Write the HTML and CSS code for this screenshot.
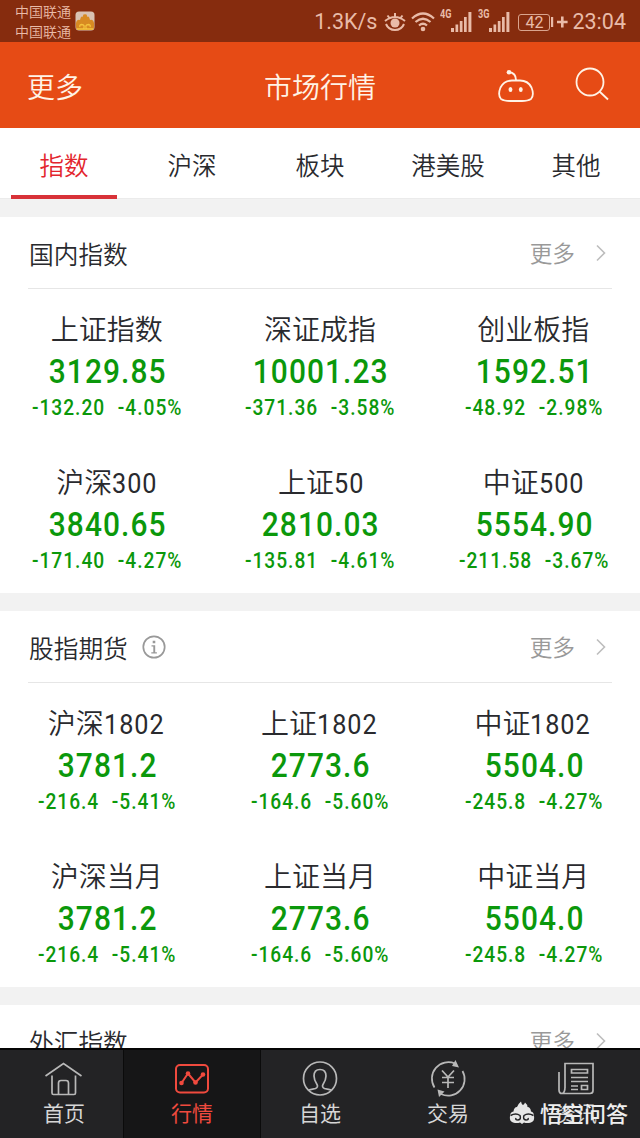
FILE: index.html
```html
<!DOCTYPE html>
<html lang="zh-CN">
<head>
<meta charset="utf-8">
<title>市场行情</title>
<link rel="stylesheet" href="styles.css">
</head>
<body>
<div class="app">
  <div class="status">
    <div class="carriers"><span>中国联通</span><span>中国联通</span></div>
    <svg class="app-badge" width="20" height="20" viewBox="0 0 20 20"><rect x=".5" y=".5" width="19" height="19" rx="3.5" fill="#d9c2b2"/><path d="M1 16V12Q2 8 5 9Q6 4 7.500 6Q9 1 10 4Q11 1 12.500 6Q14 4 15 9Q18 8 19 12V16Q19 19 16 19H4Q1 19 1 16Z" fill="#d88a22"/><path d="M8.500 18Q10.500 13.500 6.500 13.500Q4 14 5 16M11.500 18Q9.500 13.500 13.500 13.500Q16 14 15 16M2 18H18" fill="none" stroke="#f4c33e" stroke-width="1.300"/></svg>
    <div class="status-right">
      <span class="speed">1.3K/s</span>
      <svg class="eye" width="22" height="20" viewBox="0 0 22 20" fill="none" stroke="#e9bba8" stroke-width="2"><path d="M1 9Q11 1 21 9M11 1V5M3.500 3.500L5.500 6M18.500 3.500L16.500 6M2 12Q4.500 18 11 18Q17.500 18 20 12"/><circle cx="11" cy="11" r="4.500" fill="#e9bba8" stroke="none"/></svg>
      <svg class="wifi" width="24" height="20" viewBox="0 0 24 20" fill="none" stroke="#e9bba8" stroke-width="2.200"><path d="M1 6.500Q12-3.500 23 6.500M4.500 10Q12 3.500 19.500 10M8 13.500Q12 10 16 13.500"/><circle cx="12" cy="17" r="2.300" fill="#e9bba8" stroke="none"/></svg>
      <span class="net">4G</span>
      <svg class="signal" width="21" height="20" viewBox="0 0 21 20" fill="#e9bba8"><path d="M0 16h3v4H0zM4.500 12.500h2.700V20H4.500zM8.800 9h2.700v11H8.800zM13 5h2.700v15H13zM17.400 0h3v20h-3z"/></svg>
      <span class="net net-2">3G</span>
      <svg class="signal" width="21" height="20" viewBox="0 0 21 20" fill="#e9bba8"><path d="M0 16h3v4H0zM4.500 12.500h2.700V20H4.500zM8.800 9h2.700v11H8.800zM13 5h2.700v15H13zM17.400 0h3v20h-3z"/></svg>
      <span class="battery">42</span>
      <svg class="charge" width="17" height="18" viewBox="0 0 17 18" fill="#e9bba8"><path d="M0 4h2.200v10H0zM6 7.700h4V3.500h2.600v4.200h4v2.600h-4v4.200H10v-4.200H6z"/></svg>
      <span class="clock">23:04</span>
    </div>
  </div>

  <header class="header">
    <span class="header-more">更多</span>
    <h1 class="header-title">市场行情</h1>
    <div class="header-icons">
      <svg class="robot" width="38" height="34" viewBox="0 0 38 34" fill="none" stroke="#fff3e6" stroke-width="1.800"><path d="M19 11Q19 4 12 3"/><circle cx="12" cy="3.200" r="2.300" fill="#fff3e6" stroke="none"/><path d="M15 11.500H23Q31 11.500 34.500 18.500Q37.500 26 34 30Q31 32 25 32H13Q7 32 4 30Q.500 26 3.500 18.500Q7 11.500 15 11.500Z"/><g fill="#fff3e6" stroke="none"><ellipse cx="13.500" cy="20.500" rx="1.900" ry="2.500"/><ellipse cx="23.800" cy="20.500" rx="1.900" ry="2.500"/></g></svg>
      <svg width="34" height="34" viewBox="0 0 34 34" fill="none" stroke="#fff3e6" stroke-width="1.800"><circle cx="15" cy="15" r="13.500"/><path d="M24.500 24.500L33 32.500"/></svg>
    </div>
  </header>

  <nav class="tabs">
    <span class="tab tab-active">指数</span><span class="tab">沪深</span><span class="tab">板块</span><span class="tab">港美股</span><span class="tab">其他</span>
  </nav>

  <main class="content">
    <section class="section">
      <div class="section-head"><h2 class="section-title">国内指数</h2><span class="more">更多</span><svg class="chevron" width="12" height="18" viewBox="0 0 12 18"><path d="M2 1.500L9.500 9L2 16.500"/></svg></div>
      <div class="grid">
        <div class="quote"><div class="name">上证指数</div><div class="price">3129.85</div><div class="change"><span>-132.20</span><span>-4.05%</span></div></div>
        <div class="quote"><div class="name">深证成指</div><div class="price">10001.23</div><div class="change"><span>-371.36</span><span>-3.58%</span></div></div>
        <div class="quote"><div class="name">创业板指</div><div class="price">1592.51</div><div class="change"><span>-48.92</span><span>-2.98%</span></div></div>
        <div class="quote"><div class="name">沪深<b>300</b></div><div class="price">3840.65</div><div class="change"><span>-171.40</span><span>-4.27%</span></div></div>
        <div class="quote"><div class="name">上证<b>50</b></div><div class="price">2810.03</div><div class="change"><span>-135.81</span><span>-4.61%</span></div></div>
        <div class="quote"><div class="name">中证<b>500</b></div><div class="price">5554.90</div><div class="change"><span>-211.58</span><span>-3.67%</span></div></div>
      </div>
    </section>

    <section class="section">
      <div class="section-head"><h2 class="section-title">股指期货</h2><svg class="info" width="24" height="24" viewBox="0 0 24 24"><circle cx="12" cy="12" r="10.700" fill="none" stroke="#999" stroke-width="1.700"/><path d="M10.700 5.700h2.600v2.600h-2.600zM9.500 10.300h3.700v6.900h1.700v1.200H9.300v-1.200h2v-5.700H9.500z" fill="#999"/></svg><span class="more">更多</span><svg class="chevron" width="12" height="18" viewBox="0 0 12 18"><path d="M2 1.500L9.500 9L2 16.500"/></svg></div>
      <div class="grid">
        <div class="quote"><div class="name">沪深<b>1802</b></div><div class="price">3781.2</div><div class="change"><span>-216.4</span><span>-5.41%</span></div></div>
        <div class="quote"><div class="name">上证<b>1802</b></div><div class="price">2773.6</div><div class="change"><span>-164.6</span><span>-5.60%</span></div></div>
        <div class="quote"><div class="name">中证<b>1802</b></div><div class="price">5504.0</div><div class="change"><span>-245.8</span><span>-4.27%</span></div></div>
        <div class="quote"><div class="name">沪深当月</div><div class="price">3781.2</div><div class="change"><span>-216.4</span><span>-5.41%</span></div></div>
        <div class="quote"><div class="name">上证当月</div><div class="price">2773.6</div><div class="change"><span>-164.6</span><span>-5.60%</span></div></div>
        <div class="quote"><div class="name">中证当月</div><div class="price">5504.0</div><div class="change"><span>-245.8</span><span>-4.27%</span></div></div>
      </div>
    </section>

    <section class="section">
      <div class="section-head"><h2 class="section-title">外汇指数</h2><span class="more">更多</span><svg class="chevron" width="12" height="18" viewBox="0 0 12 18"><path d="M2 1.500L9.500 9L2 16.500"/></svg></div>
    </section>
  </main>

  <nav class="bottom">
    <div class="item"><svg width="38" height="38" viewBox="0 0 38 38"><path d="M.5 16L18.500 3.500L36.500 16M7 15.500V33Q7 34.500 8.500 34.500H13.500V23Q13.500 20.500 16 20.500H21Q23.500 20.500 23.500 23V34.500H29Q30.500 34.500 30.500 33V15.500M13.500 34.500H23.500"/></svg><span>首页</span></div>
    <div class="item item-active"><svg width="38" height="38" viewBox="0 0 38 38"><rect x="3" y="5" width="32" height="27.500" rx="4" stroke-width="2"/><path d="M8.500 23L15 13.500L22.500 22.500L30 14.500" stroke-width="2"/><g fill="#f04a3e" stroke="none"><circle cx="8.500" cy="23" r="2.300"/><circle cx="15" cy="13.500" r="2.300"/><circle cx="22.500" cy="22.500" r="2.300"/><circle cx="30" cy="14.500" r="2.300"/></g></svg><span>行情</span></div>
    <div class="item"><svg width="38" height="38" viewBox="0 0 38 38"><circle cx="19" cy="18.500" r="16.500"/><path d="M7.500 30Q10 29.500 14.500 28.500Q17.500 27 16 24.500Q13 20 13 16Q13 9.500 19 9.500Q25 9.500 25 16Q25 20 22 24.500Q20.500 27 23.500 28.500Q28 29.500 30.500 30"/></svg><span>自选</span></div>
    <div class="item"><svg width="38" height="38" viewBox="0 0 38 38"><path d="M5.500 27.500A16.500 16.500 0 0 1 26 3.500M33.500 11A16.500 16.500 0 0 1 12 34M13 10.500L19 17L25 10.500M13 17.500H25M13 22.500H25M19 17V28"/><path d="M26.500 0L30 7.500L23 6ZM8.500 29.500L15.500 31.500L10 37Z" fill="#b8b8b8" stroke="none"/></svg><span>交易</span></div>
    <div class="item"><svg width="38" height="38" viewBox="0 0 38 38"><path d="M8 28V3.500H36V30.500Q36 33.500 33 33.500H5Q2 33.500 2 30V12M8 27Q8 33 5 33.500M14.500 9.500H30.500V13H14.500ZM14 17.500H31M14 21.500H31M14 26H21M14 29.500H21M24.500 25.500H30.500V29.500H24.500Z"/></svg><span>资讯</span></div>
    <div class="watermark"><svg width="26" height="24" viewBox="0 0 26 24"><path d="M1 15Q1 11 4.500 10.500Q5 6 8 6Q9 3 12 .500Q12.500 3.500 14 4Q15.500 3 16 1.500Q18.500 3.500 18.500 6Q21.500 6 22 10.500Q25 11 25 15Q26 20 22 21.500Q18 22.500 15 21.500L13 23L11 21.500Q8 22.500 4 21.500Q0 20 1 15Z" fill="#e6e6e6"/><path d="M1.500 14.500Q7 11.500 11 14.500Q12.500 18.500 9 19Q6 19 7 17M24.500 14.500Q19 11.500 15 14.500Q13.500 18.500 17 19Q20 19 19 17" fill="none" stroke="#232325" stroke-width="1.500"/></svg><span>悟空问答</span></div>
  </nav>
</div>
</body>
</html>
```
FILE: styles.css
```css
* { box-sizing: border-box; }
body { margin: 0; }
h1, h2 { margin: 0; font-weight: inherit; }
svg { display: block; flex: none; }

.app {
  display: flex;
  flex-direction: column;
  width: 640px;
  height: 1138px;
  overflow: hidden;
  background: #f2f2f2;
  color: #292a2e;
  font-family: Roboto, "Noto Sans CJK SC", sans-serif;
  font-weight: 350;
  white-space: nowrap;
}

.status {
  flex: none;
  display: flex;
  align-items: center;
  height: 42px;
  padding: 0 14px 0 15px;
  background: #862c0e;
  color: #e9bba8;
  font-weight: 400;
}
.carriers { display: flex; flex-direction: column; font-size: 14px; line-height: 19.500px; font-weight: 350; padding-top: 3px; }
.app-badge { margin-left: 4px; }
.status-right { display: flex; align-items: center; margin-left: auto; font-size: 21.500px; line-height: 30px; padding-top: 2px; }
.eye { margin-left: 7px; }
.wifi { margin-left: 5px; }
.net { align-self: flex-start; margin: -1px 0 0 5px; font-size: 12px; line-height: 17px; font-weight: 700; transform: scaleX(.76); transform-origin: left; width: 11px; }
.net-2 { margin-left: 6px; }
.battery { width: 32px; height: 17px; margin-left: 8px; border: 1px solid #d9a48e; border-radius: 3px; font-size: 16px; line-height: 16px; text-align: center; }
.charge { margin-left: 1px; }
.clock { margin-left: 4px; }

.header {
  flex: none;
  display: grid;
  grid-template-columns: 1fr auto 1fr;
  align-items: center;
  height: 86px;
  padding: 0 28px;
  background: #e64b15;
  color: #fff3e6;
  font-size: 28px;
}
.header-more { margin-left: -1px; padding-top: 1px; }
.header-title { font-size: 28px; padding-top: 1px; }
.header-icons { display: flex; justify-content: flex-end; gap: 40px; margin-right: 3px; }
.robot { margin-top: 2px; }

.tabs {
  flex: none;
  display: grid;
  grid-template-columns: repeat(5, 1fr);
  height: 71px;
  background: #fff;
  border-bottom: 1px solid #ebebeb;
}
.tab { font-size: 24.500px; line-height: 77px; text-align: center; height: 71px; }
.tab-active { color: #e3252d; margin: 0 11px; border-bottom: 4px solid #d83238; }

.content { flex: 1; min-height: 0; overflow: hidden; display: flex; flex-direction: column; gap: 18px; padding-top: 18px; }
.section { flex: none; background: #fff; }
.section-head { display: flex; align-items: center; height: 72px; margin: 0 28px; border-bottom: 1px solid #e6e6e6; }
.section-title { font-size: 24.700px; margin-left: 1px; }
.info { margin-left: 14px; }
.more { margin-left: auto; font-size: 22.700px; color: #999; margin-top: -1px; }
.chevron { margin: 0 5px 0 20px; fill: none; stroke: #bdbdbd; stroke-width: 1.600; }

.grid { display: grid; grid-template-columns: repeat(3, 1fr); }
.quote { height: 152px; padding-top: 23px; text-align: center; }
.quote:nth-child(n+4) { padding-top: 23.500px; }
.name { font-size: 28px; line-height: 38px; }
.name b { display: inline-block; font-weight: 450; letter-spacing: 1.100px; transform: scaleX(.9); transform-origin: left; margin-right: -.2em; }
.price { margin-top: -2px; color: #0b980b; font-size: 34px; line-height: 46px; font-weight: 500; letter-spacing: 1.200px; transform: translateX(1px) scaleX(.88); }
.change { display: flex; justify-content: center; gap: 14px; color: #0b980b; font-size: 21.300px; line-height: 28px; font-weight: 500; letter-spacing: 1.100px; transform: translateX(.5px) scaleX(.9); }

.bottom {
  position: relative;
  flex: none;
  display: grid;
  grid-template-columns: repeat(5, 1fr);
  height: 90px;
  background: #232325;
  border-top: 2px solid #050505;
}
.item { display: flex; flex-direction: column; align-items: center; padding-top: 10px; color: #d6d6d6; font-size: 21px; line-height: 32px; font-weight: 400; }
.item svg { fill: none; stroke: #b8b8b8; stroke-width: 1.700; }
.item-active { margin: 0 -5px; background: #161617; color: #f04a3e; border: solid #0b0b0b; border-width: 0 1px; }
.item-active svg { stroke: #f04a3e; }
.watermark { position: absolute; right: 12px; top: 49px; display: flex; align-items: center; gap: 5px; color: #eee; font-size: 22px; line-height: 32px; font-weight: 500; }
.watermark svg { margin-top: -4px; }
```
